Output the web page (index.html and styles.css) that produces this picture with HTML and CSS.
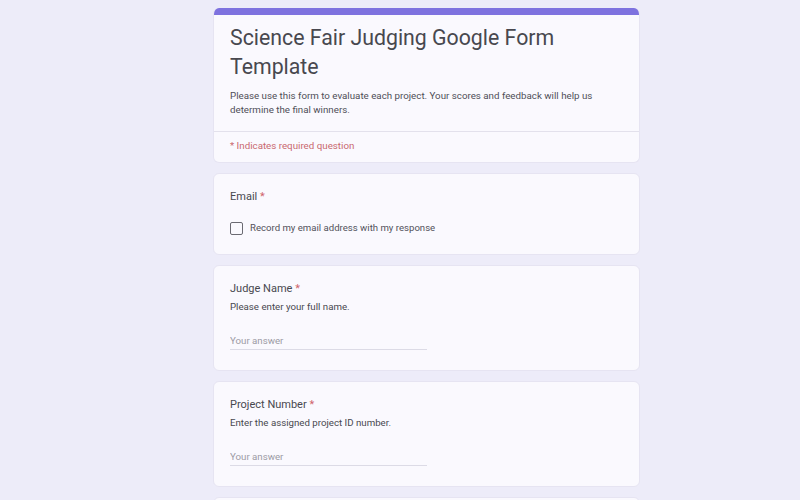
FILE: index.html
```html
<!DOCTYPE html>
<html lang="en">

<head>
    <meta charset="UTF-8">
    <meta name="viewport" content="width=device-width, initial-scale=1.0">
    <title>Science Fair Judging Google Form Template</title>
    <link rel="stylesheet" href="styles.css">
</head>

<body>
    <div class="form">
        <!-- 表单头部 -->
        <div class="card header">
            <div class="bar"></div>
            <div class="head">
                <h1>Science Fair Judging Google Form Template</h1>
                <p>Please use this form to evaluate each project. Your scores and feedback will help us determine the final winners.</p>
            </div>
            <div class="note">* Indicates required question</div>
        </div>

        <div class="card question">
            <div class="title">Email <span class="req">*</span></div>
            <label class="check">
                <span class="box"></span>
                <span>Record my email address with my response</span>
            </label>
        </div>

        <div class="card question">
            <div class="title">Judge Name <span class="req">*</span></div>
            <div class="desc">Please enter your full name.</div>
            <input type="text" class="answer" placeholder="Your answer" />
        </div>

        <div class="card question">
            <div class="title">Project Number <span class="req">*</span></div>
            <div class="desc">Enter the assigned project ID number.</div>
            <input type="text" class="answer" placeholder="Your answer" />
        </div>

        <!-- 下一题（在可视区域外） -->
        <div class="card question next"></div>
    </div>
</body>

</html>
```

FILE: styles.css
```css
body {
    margin: 0;
    padding: 8px 0 0;
    background-color: #edecf9;
    font-family: Roboto, "Liberation Sans", sans-serif;
    color: #46464f;
}

.form {
    width: 427px;
    margin-left: 213px;
}

.card {
    background-color: #faf9fe;
    border: 1px solid #e6e4f2;
    border-radius: 6px;
    margin-bottom: 10px;
    box-sizing: border-box;
}

.header {
    overflow: hidden;
    border-top: none;
}

.header .bar {
    height: 7px;
    background-color: #7e72df;
}

.header .head {
    padding: 8px 16px 15px;
    border-bottom: 1px solid #e3e1ec;
}

.header h1 {
    margin: 0;
    font-size: 21.3px;
    line-height: 29px;
    font-weight: 400;
    color: #48484f;
}

.header p {
    margin: 8px 0 0;
    font-size: 9.75px;
    line-height: 13.5px;
    color: #4e4e57;
}

.note {
    padding: 7px 16px 9px;
    font-size: 9.75px;
    line-height: 14px;
    color: #c9686e;
}

.question {
    padding: 16px 16px 20px;
}

.question.next {
    height: 106px;
}

.title {
    font-size: 11px;
    line-height: 14px;
    color: #48484f;
}

.req {
    color: #d0646b;
}

.desc {
    margin-top: 4px;
    font-size: 9.7px;
    line-height: 14px;
    color: #48484f;
}

.check {
    display: flex;
    align-items: center;
    gap: 7px;
    margin-top: 17px;
    margin-bottom: -1px;
    font-size: 9.6px;
    line-height: 14px;
    color: #52525b;
}

.check .box {
    width: 13px;
    height: 13px;
    box-sizing: border-box;
    border: 1.5px solid #6a6a72;
    border-radius: 2px;
}

.answer {
    display: block;
    width: 197px;
    height: 17px;
    margin-top: 18px;
    padding: 0;
    border: none;
    border-bottom: 1px solid #dcdbe6;
    background: transparent;
    outline: none;
    font-family: Roboto, "Liberation Sans", sans-serif;
    font-size: 9.7px;
    color: #48484f;
}

.answer::placeholder {
    color: #9c9ba5;
}
```
